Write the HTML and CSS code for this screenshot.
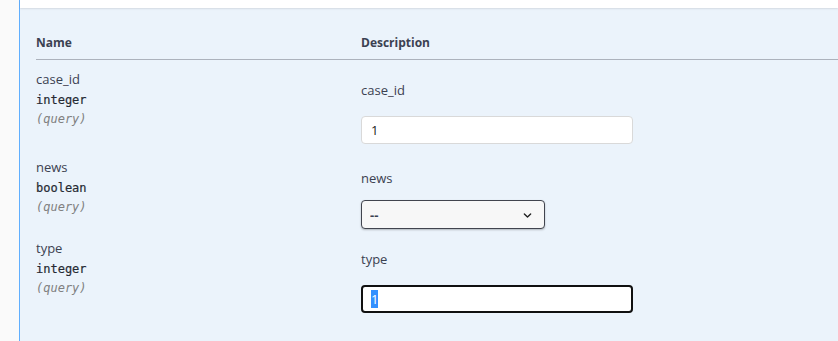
FILE: index.html
```html
<!DOCTYPE html>
<html lang="en">
<head>
    <meta charset="UTF-8">
    <meta name="viewport" content="width=device-width, initial-scale=1.0">
    <title>Parameters</title>
    <link rel="stylesheet" href="styles.css">
</head>
<body>
    <div class="opblock">
        <div class="section-header"></div>

        <div class="table-container">
            <table class="parameters">
                <thead>
                    <tr>
                        <th class="col-name">Name</th>
                        <th class="col-desc">Description</th>
                    </tr>
                </thead>
                <tbody>
                    <tr>
                        <td class="param-name">
                            <div class="name">case_id</div>
                            <div class="type">integer</div>
                            <div class="in">(query)</div>
                        </td>
                        <td class="param-desc">
                            <div class="desc">case_id</div>
                            <input type="text" class="field" value="1" placeholder="case_id">
                        </td>
                    </tr>
                    <tr>
                        <td class="param-name">
                            <div class="name">news</div>
                            <div class="type">boolean</div>
                            <div class="in">(query)</div>
                        </td>
                        <td class="param-desc">
                            <div class="desc">news</div>
                            <span class="select-wrap">
                                <select class="select">
                                    <option>--</option>
                                    <option>true</option>
                                    <option>false</option>
                                </select>
                                <svg class="chevron" viewBox="0 0 10 6" fill="none" xmlns="http://www.w3.org/2000/svg">
                                    <path d="M1.5 1.2L5 4.6L8.5 1.2" stroke="#1f1f1f" stroke-width="1.5" stroke-linecap="round" stroke-linejoin="round"/>
                                </svg>
                            </span>
                        </td>
                    </tr>
                    <tr>
                        <td class="param-name">
                            <div class="name">type</div>
                            <div class="type">integer</div>
                            <div class="in">(query)</div>
                        </td>
                        <td class="param-desc">
                            <div class="desc">type</div>
                            <input type="text" class="field" id="typeInput" value="1" placeholder="type">
                        </td>
                    </tr>
                </tbody>
            </table>
        </div>
    </div>

    <script src="script.js"></script>
</body>
</html>
```

FILE: styles.css
```css
:root {
    --text: #3b4151;
    --get: #61affe;
    --panel: #ebf3fb;
}

* {
    margin: 0;
    padding: 0;
    box-sizing: border-box;
}

body {
    font-family: 'Open Sans', sans-serif;
    background: #fafafa;
    color: var(--text);
    min-height: 100vh;
}

.opblock {
    margin-left: 19px;
    border-left: 1px solid var(--get);
    background: var(--panel);
    min-height: 100vh;
}

.section-header {
    height: 8px;
    background: #fff;
    box-shadow: 0 1px 2px rgba(0, 0, 0, 0.1);
}

.table-container {
    padding: 15px 0 0 16px;
}

.parameters {
    width: 100%;
    border-collapse: collapse;
}

.parameters th {
    text-align: left;
    font-size: 12px;
    font-weight: 700;
    line-height: 16px;
    padding: 12px 0 8px;
    border-bottom: 1px solid rgba(59, 65, 81, 0.2);
}

.col-name {
    width: 325px;
}

.parameters td {
    vertical-align: top;
    padding: 8px 0 0;
}

.name,
.desc {
    font-size: 13px;
    line-height: 20px;
}

.name {
    margin-top: 1px;
}

.type {
    font-family: 'DejaVu Sans Mono', monospace;
    font-size: 12px;
    font-weight: 400;
    -webkit-text-stroke: 0.2px #262a33;
    color: #262a33;
    line-height: 18px;
    margin-top: 2px;
}

.in {
    font-family: 'DejaVu Sans Mono', monospace;
    font-size: 12px;
    font-style: italic;
    line-height: 18px;
    margin-top: 1px;
    color: #808080;
}

.desc {
    margin-top: 12px;
}

.field {
    display: block;
    width: 272px;
    height: 28px;
    margin: 16px 0 4px;
    padding: 0 9px;
    border: 1px solid #d9d9d9;
    border-radius: 4px;
    background: #fff;
    font-family: 'Open Sans', sans-serif;
    font-size: 13px;
    color: #222;
}

.field:focus {
    outline: 2px solid #101010;
    outline-offset: -2px;
}

.field::selection {
    background: #3390ff;
    color: #fff;
}

.select-wrap {
    position: relative;
    display: inline-block;
    margin-top: 12px;
}

.select {
    display: block;
    appearance: none;
    width: 184px;
    height: 29px;
    padding: 0 30px 0 8px;
    border: 1px solid #41444e;
    border-radius: 4px;
    background: #f7f7f7;
    box-shadow: 0 1px 2px rgba(0, 0, 0, 0.25);
    font-family: 'Open Sans', sans-serif;
    font-size: 13px;
    font-weight: 700;
    color: var(--text);
}

.chevron {
    position: absolute;
    right: 13px;
    top: 50%;
    width: 9px;
    height: 6px;
    transform: translateY(-40%);
    pointer-events: none;
}
```

FILE: script.js
```js
// Focus the last field and select its value
const typeInput = document.getElementById('typeInput');
typeInput.focus();
typeInput.select();
```
